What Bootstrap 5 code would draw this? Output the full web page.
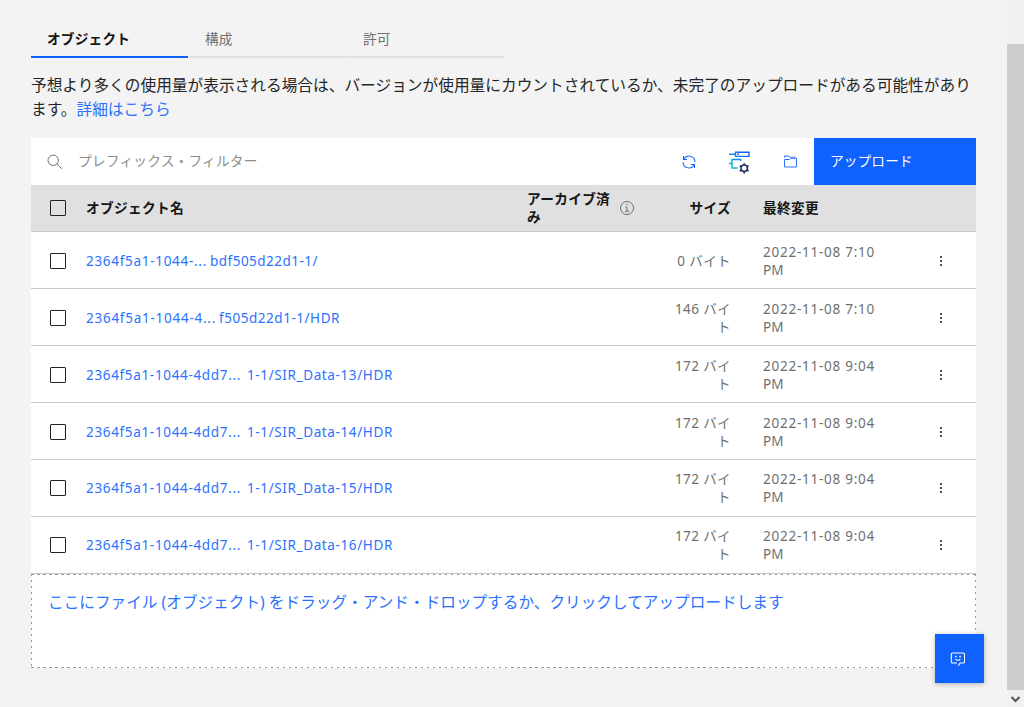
<!DOCTYPE html>
<html lang="ja">
<head>
<meta charset="utf-8">
<meta name="viewport" content="width=device-width, initial-scale=1">
<title>オブジェクト</title>
<link href="https://cdn.jsdelivr.net/npm/bootstrap@5.3.0/dist/css/bootstrap.min.css" rel="stylesheet">
<style>
  html, body { height: 100%; overflow: hidden; }
  body { background: #f3f3f3; color: #262626; font-family: "Noto Sans", "Noto Sans CJK JP", sans-serif; font-size: 13.7px; letter-spacing: .16px; }
  .pane { width: 1007px; height: 707px; padding: 20px 31px 0; }
  .tabs { gap: 1.5px; }
  .tabs a { width: 156.5px; height: 38px; padding: 0 16px; line-height: 37px; color: #6f6f6f; border-bottom: 2px solid #e0e0e0; text-decoration: none; }
  .tabs a.active { color: #161616; font-weight: 700; border-color: #0f62fe; }
  .blue { color: #2b72fe; text-decoration: none; }
  .note { font-size: 15.7px; line-height: 24px; letter-spacing: 0; margin: 15px -4px 17px 0; height: 48px; white-space: nowrap; }
  .tools { height: 47px; background: #fff; }
  .tools .hint { color: #8d8d8d; margin-left: 15px; letter-spacing: .2px; }
  .upload { width: 162px; height: 47px; background: #0f62fe; color: #fff; border: 0; border-radius: 0; font-size: 13.7px; letter-spacing: .1px; padding: 0 16px; text-align: left; }
  .objects { table-layout: fixed; width: 945px; line-height: 18px; border-collapse: separate; border-spacing: 0; }
  .objects th, .objects td { padding: 0; vertical-align: middle; border-bottom: 1px solid #c9c9c9; }
  .objects thead tr { height: 47px; background: #e0e0e0; }
  .objects thead th { letter-spacing: .3px; color: #161616; }
  .objects tbody tr { height: 57px; background: #fff; color: #6f6f6f; }
  .objects tbody tr:nth-child(-n+4) td { padding-top: 2px; }
  .objects .box { display: block; width: 16px; height: 16px; margin-left: 19px; border: 1px solid #222; border-radius: 1px; background: transparent; appearance: none; }
  .objects .stamp { padding-left: 32px; }
  .latin { font-family: "Noto Sans", "Noto Sans CJK JP", sans-serif; font-size: 13.5px; }
  .size { letter-spacing: .4px; }
  .key { display: inline-block; white-space: pre; }
  .drop { height: 94px; padding: 16px 17px; font-size: 15.65px; letter-spacing: 0; line-height: 24px;
    background:
      repeating-linear-gradient(90deg, #999 0 2.5px, transparent 2.5px 6px) 0 0 / 100% 1px no-repeat,
      repeating-linear-gradient(90deg, #999 0 2.5px, transparent 2.5px 6px) 0 100% / 100% 1px no-repeat,
      repeating-linear-gradient(#999 0 2.5px, transparent 2.5px 6px) 0 0 / 1px 100% no-repeat,
      repeating-linear-gradient(#999 0 2.5px, transparent 2.5px 6px) 100% 0 / 1px 100% no-repeat, #fff; }
  .chat { right: 40px; bottom: 24px; width: 49px; height: 49px; padding-right: 3px; background: #0f62fe; box-shadow: 0 1px 5px rgba(0,0,0,.28); }
  .scroller { width: 17px; height: 707px; background: #f0f0f0; padding-top: 44px; }
  .thumb { height: 646px; background: #cdcdcd; }
</style>
</head>
<body class="d-flex">
<main class="pane flex-shrink-0">
  <nav class="tabs d-flex">
    <a href="#" class="active">オブジェクト</a><a href="#">構成</a><a href="#">許可</a>
  </nav>
  <p class="note">予想より多くの使用量が表示される場合は、バージョンが使用量にカウントされているか、未完了のアップロードがある可能性があり<br>ます。<a href="#" class="blue">詳細はこちら</a></p>

  <div class="tools d-flex align-items-center">
    <svg class="ms-3" width="16" height="16" viewBox="0 0 16 16" fill="none" stroke="#6f6f6f"><circle cx="6.2" cy="6.3" r="5.2"/><path d="M10 10.1l4.9 4.8"/></svg>
    <span class="hint me-auto">プレフィックス・フィルター</span>
    <svg width="16" height="16" viewBox="0 0 32 32" fill="#0f62fe"><path d="M12 10H6.8A11 11 0 0 1 27 16h2A13 13 0 0 0 6 7.7V4H4v8h8zM20 22h5.2A11 11 0 0 1 5 16H3a13 13 0 0 0 23 8.3V28h2v-8h-8z"/></svg>
    <svg style="margin-left:32px" width="22" height="24" viewBox="0 0 22 24" fill="none" stroke-width="1.4"><defs><linearGradient id="flow" gradientUnits="userSpaceOnUse" x1="0" y1="18" x2="14" y2="2"><stop stop-color="#12c5c9"/><stop offset="1" stop-color="#0f62fe"/></linearGradient></defs><path d="M6.5 2.2h13.5v4.2H6.5zM0 4.3h6.5" stroke="url(#flow)"/><path d="M8.5 4.3h1.3" stroke="#222a55"/><path d="M11.700 11V9.500H3v8.500h5.500M0 13.500h3" stroke="url(#flow)"/><circle cx="15.2" cy="18.3" r="3.2" stroke="#292d63" stroke-width="1.5"/><path d="M15.2 13.2v2M15.2 21.4v2.1M10.8 15.7l1.7 1M17.9 19.9l1.7 1M10.8 20.9l1.7-1M17.9 16.7l1.7-1" stroke="#292d63" stroke-width="1.7"/></svg>
    <svg style="margin:0 16px 0 32px" width="15" height="15" viewBox="0 0 15 15" fill="none" stroke="#2b72fe"><path d="M1.5 5.500h5l1.300-1.200h5.700v8.700h-12zM1.500 3.700V2h4l2 1.200h5"/></svg>
    <button class="upload btn">アップロード</button>
  </div>

  <table class="objects">
    <colgroup><col style="width:55px"><col style="width:441px"><col style="width:121px"><col style="width:83px"><col style="width:195px"><col style="width:50px"></colgroup>
    <thead><tr>
      <th><input type="checkbox" class="box"></th><th>オブジェクト名</th>
      <th><div class="d-flex align-items-center"><span>アーカイブ済<br>み</span><svg style="margin-left:9px" width="16" height="16" viewBox="0 0 16 16" fill="none" stroke="#6f6f6f"><circle cx="8" cy="8" r="6.5"/><path d="M6.4 7.1H8v4.1M6 11.3h4M7.4 4.7h1.2"/></svg></div></th>
      <th class="text-end">サイズ</th><th class="stamp">最終変更</th><th></th>
    </tr></thead>
    <tbody id="rows"></tbody>
  </table>
  <div class="drop blue">ここにファイル (オブジェクト) をドラッグ・アンド・ドロップするか、クリックしてアップロードします</div>
</main>

<div class="scroller flex-shrink-0">
  <div class="thumb"></div>
  <svg class="d-block" width="17" height="17" viewBox="0 0 17 17" fill="none" stroke="#555" stroke-width="2"><path d="M4.5 7l4 4 4-4"/></svg>
</div>
<div class="chat position-absolute d-flex align-items-center justify-content-center">
  <svg width="16" height="16" viewBox="0 0 16 16" fill="none" stroke="#fff" stroke-width="1.1"><path d="M7 12H2.5A1.2 1.2 0 0 1 1.3 10.8V3.2A1.2 1.2 0 0 1 2.5 2h10.800a1.2 1.2 0 0 1 1.2 1.2v7.600A1.2 1.2 0 0 1 13.300 12H10l-1.700 2.800M5.400 8.200q2.500 2 5 0"/><path d="M5 5.500h1.500M9.300 5.500h1.500" stroke-width="1.4"/></svg>
</div>

<script src="https://cdn.jsdelivr.net/npm/bootstrap@5.3.0/dist/js/bootstrap.bundle.min.js"></script>
<script>
  const objects = [
    ['2364f5a1-1044-...', 'bdf505d22d1-1/', 124, 108, '0 バイト', '7:10'],
    ['2364f5a1-1044-4...', 'f505d22d1-1/HDR', 133, 121, '146 バイ<br>ト', '7:10'],
    ...[13, 14, 15, 16].map(n => ['2364f5a1-1044-4dd7...', `1-1/SIR_Data-${n}/HDR`, 161, 146, '172 バイ<br>ト', '9:04'])
  ];
  const rows = document.getElementById('rows');
  rows.innerHTML = objects.map(([head, tail, w1, w2, size, time]) => `<tr>
    <td><input type="checkbox" class="box"></td>
    <td><a href="#" class="blue latin d-flex"><span class="key" data-gap="${w1 === 161 ? 155 : w1 - 3}" style="width:${w1}px">${head}</span><span class="key" data-gap="${w2}">${tail}</span></a></td>
    <td></td><td class="text-end latin size">${size}</td>
    <td class="stamp latin"><span class="key" data-gap="112">2022-11-08 ${time}</span><br>PM</td>
    <td><svg class="d-block" style="margin-left:7px" width="16" height="16" viewBox="0 0 16 16" fill="#161616"><circle cx="8" cy="4" r="1"/><circle cx="8" cy="8" r="1"/><circle cx="8" cy="12" r="1"/></svg></td>
  </tr>`).join('');
  rows.querySelectorAll('[data-gap]').forEach(el => {
    const range = document.createRange();
    el.style.letterSpacing = '0px';
    range.selectNodeContents(el);
    el.style.letterSpacing = (el.dataset.gap - range.getBoundingClientRect().width) / el.textContent.length + 'px';
  });
</script>
</body>
</html>
